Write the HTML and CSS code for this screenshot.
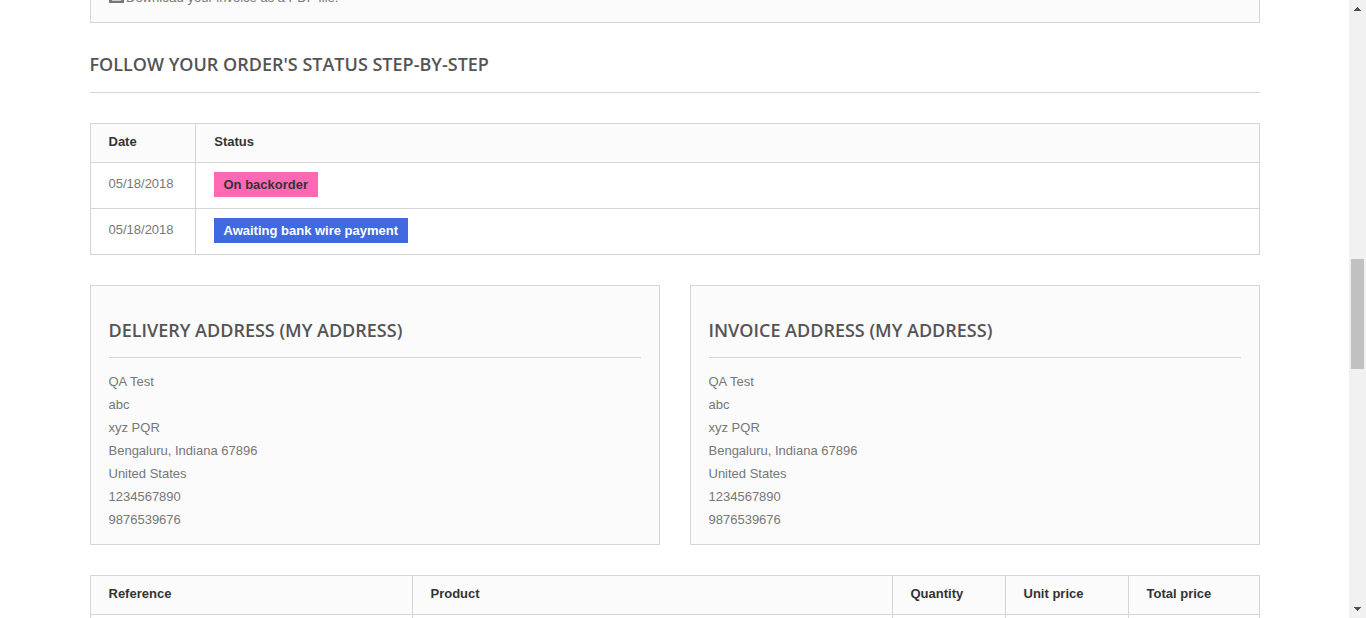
FILE: index.html
```html
<!DOCTYPE html>
<html lang="en">
<head>
<meta charset="utf-8">
<title>Order details</title>
<link rel="stylesheet" href="styles.css">
</head>
<body>
<div class="window">
  <main class="page">
    <section class="box box-download">
      <p class="download"><svg class="file-icon" width="15" height="14" viewBox="0 0 15 14"><rect width="15" height="14" rx=".5" fill="#777"/><path fill="#cdd1cb" d="M3 2h9v10H3z"/></svg>Download your invoice as a PDF file.</p>
    </section>

    <h1 class="heading">Follow your order's status step-by-step</h1>

    <table class="table status-table">
      <colgroup><col class="col-date"><col></colgroup>
      <thead><tr><th>Date</th><th class="status-head">Status</th></tr></thead>
      <tbody>
        <tr><td>05/18/2018</td><td class="status-cell"><span class="label label-backorder">On backorder</span></td></tr>
        <tr><td>05/18/2018</td><td class="status-cell"><span class="label label-bankwire">Awaiting bank wire payment</span></td></tr>
      </tbody>
    </table>

    <div class="addresses">
      <section class="box address">
        <h3 class="subheading">Delivery address (My address)</h3>
        <ul class="lines">
          <li>QA Test</li><li>abc</li><li>xyz PQR</li><li>Bengaluru, Indiana 67896</li><li>United States</li><li>1234567890</li><li>9876539676</li>
        </ul>
      </section>
      <section class="box address">
        <h3 class="subheading">Invoice address (My address)</h3>
        <ul class="lines">
          <li>QA Test</li><li>abc</li><li>xyz PQR</li><li>Bengaluru, Indiana 67896</li><li>United States</li><li>1234567890</li><li>9876539676</li>
        </ul>
      </section>
    </div>

    <table class="table product-table">
      <colgroup><col class="col-reference"><col class="col-product"><col class="col-quantity"><col class="col-unit"><col></colgroup>
      <thead><tr><th>Reference</th><th>Product</th><th>Quantity</th><th>Unit price</th><th>Total price</th></tr></thead>
      <tbody><tr><td></td><td></td><td></td><td></td><td></td></tr></tbody>
    </table>
  </main>

  <aside class="scrollbar">
    <svg class="arrow" width="17" height="17" viewBox="0 0 17 17" shape-rendering="crispEdges"><path fill="#505050" d="M8 7h1v1h1v1h1v1h1v1H5v-1h1V9h1V8h1z"/></svg>
    <div class="track"><div class="thumb"></div></div>
    <svg class="arrow" width="17" height="17" viewBox="0 0 17 17" shape-rendering="crispEdges"><path fill="#505050" d="M5 6h7v1h-1v1h-1v1H9v1H8V9H7V8H6V7H5z"/></svg>
  </aside>
</div>
</body>
</html>
```
FILE: styles.css
```css
* {
  box-sizing: border-box;
}

body {
  margin: 0;
  background: #fff;
  color: #777;
  font: 13px/18px "Liberation Sans", Arial, sans-serif;
  overflow: hidden;
}

.window {
  display: flex;
  height: 618px;
  overflow: hidden;
}

.page {
  flex: 1;
  padding: 0 89px 0 90px;
}

.box {
  border: 1px solid #d6d4d4;
  background: #fbfbfb;
  padding: 0 18px;
}

.box-download {
  display: flex;
  flex-direction: column;
  justify-content: flex-end;
  height: 23px;
  border-top: 0;
  padding: 0 17.5px 13px;
  overflow: hidden;
}

.download {
  display: flex;
  flex: none;
  align-items: center;
  gap: 2.5px;
  margin: 0;
  line-height: 23px;
}

.file-icon {
  margin-bottom: 3px;
}

.heading,
.subheading {
  margin: 0;
  border-bottom: 1px solid #d6d4d4;
  color: #555454;
  font: 600 18px/22px "Open Sans", sans-serif;
  text-indent: -0.5px;
  text-transform: uppercase;
}

.heading {
  margin: 30px 0;
  padding-bottom: 17px;
}

.table {
  width: 100%;
  table-layout: fixed;
  border: solid #d6d4d4;
  border-width: 1px 0 0 1px;
  border-spacing: 0;
}

.table th,
.table td {
  border: solid #d6d4d4;
  border-width: 0 1px 1px 0;
  padding: 9px 0 0 17.5px;
  text-align: left;
  vertical-align: top;
}

.table th {
  height: 39px;
  background: #fbfbfb;
  color: #333;
}

.table .status-head {
  padding-left: 18.25px;
}

.table td {
  height: 46px;
  padding-top: 12px;
}

.table .status-cell {
  padding: 9px 0 0 18px;
}

.col-date { width: 105px; }
.col-reference { width: 322px; }
.col-product { width: 480px; }
.col-quantity { width: 113px; }
.col-unit { width: 123px; }

.label {
  display: inline-block;
  height: 25px;
  padding: 0 9.5px;
  font-weight: 700;
  line-height: 25px;
}

.label-backorder {
  background: #ff69b4;
  color: #333;
}

.label-bankwire {
  background: #4169e1;
  color: #fff;
}

.addresses {
  display: grid;
  grid-template-columns: 1fr 1fr;
  gap: 30px;
  margin: 30px 0;
}

.address {
  height: 260px;
  padding-top: 33px;
}

.subheading {
  padding-bottom: 16px;
}

.lines {
  margin: 12px 0 0 -0.5px;
  padding: 0;
  list-style: none;
  line-height: 23px;
}

.scrollbar {
  display: flex;
  flex-direction: column;
  width: 17px;
  background: #f1f1f1;
}

.arrow {
  display: block;
  flex: none;
}

.track {
  flex: 1;
  padding: 242px 2px 0;
}

.thumb {
  height: 110px;
  background: #c1c1c1;
}
```
